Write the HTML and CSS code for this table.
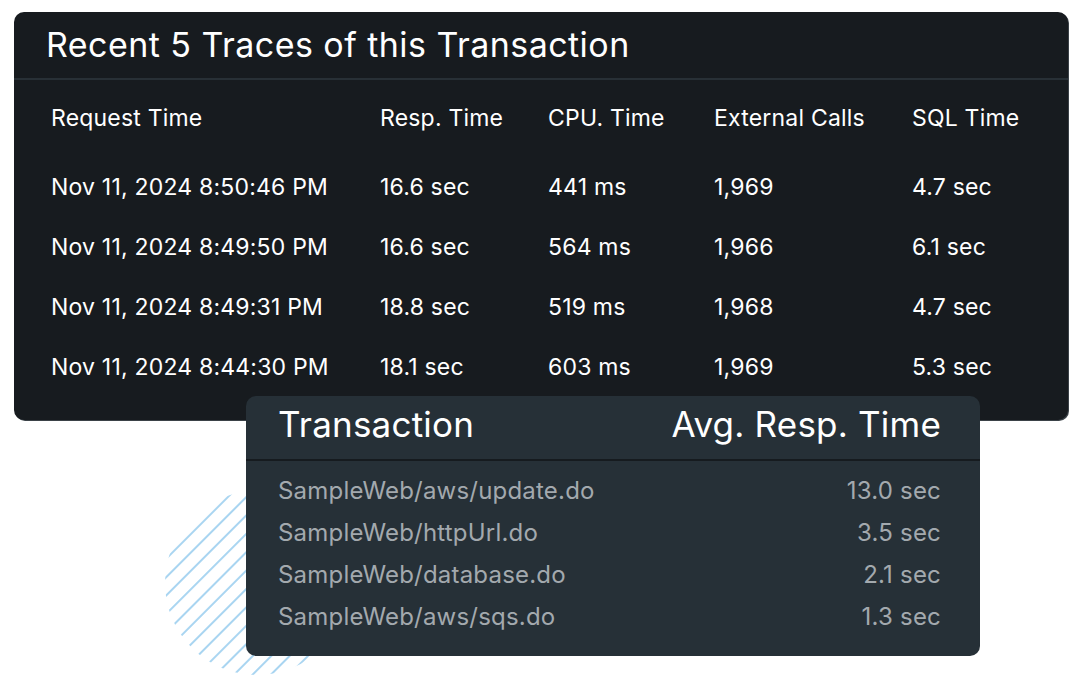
FILE: index.html
```html
<!DOCTYPE html>
<html lang="en">
<head>
    <meta charset="UTF-8">
    <meta name="viewport" content="width=device-width, initial-scale=1.0">
    <title>Recent Traces</title>
    <link rel="stylesheet" href="styles.css">
</head>
<body>
    <!-- hatched circle behind the summary card -->
    <svg class="hatch" width="190" height="190" viewBox="0 0 190 190">
        <defs>
            <pattern id="stripes" width="13" height="13" patternUnits="userSpaceOnUse" patternTransform="rotate(45)">
                <rect x="0" y="0" width="2" height="13" fill="#a9d5f1"></rect>
            </pattern>
            <clipPath id="disc">
                <circle cx="95" cy="95" r="92"></circle>
            </clipPath>
        </defs>
        <rect width="190" height="190" fill="url(#stripes)" clip-path="url(#disc)"></rect>
    </svg>

    <div class="traces-card">
        <h2 class="traces-title">Recent 5 Traces of this Transaction</h2>
        <div class="traces-table">
            <div class="traces-row traces-head">
                <span>Request Time</span>
                <span>Resp. Time</span>
                <span>CPU. Time</span>
                <span>External Calls</span>
                <span>SQL Time</span>
            </div>
            <div class="traces-row">
                <span>Nov 11, 2024 8:50:46 PM</span>
                <span>16.6 sec</span>
                <span>441 ms</span>
                <span>1,969</span>
                <span>4.7 sec</span>
            </div>
            <div class="traces-row">
                <span>Nov 11, 2024 8:49:50 PM</span>
                <span>16.6 sec</span>
                <span>564 ms</span>
                <span>1,966</span>
                <span>6.1 sec</span>
            </div>
            <div class="traces-row">
                <span>Nov 11, 2024 8:49:31 PM</span>
                <span>18.8 sec</span>
                <span>519 ms</span>
                <span>1,968</span>
                <span>4.7 sec</span>
            </div>
            <div class="traces-row">
                <span>Nov 11, 2024 8:44:30 PM</span>
                <span>18.1 sec</span>
                <span>603 ms</span>
                <span>1,969</span>
                <span>5.3 sec</span>
            </div>
        </div>
    </div>

    <div class="txn-card">
        <div class="txn-head">
            <span>Transaction</span>
            <span>Avg. Resp. Time</span>
        </div>
        <div class="txn-list">
            <div class="txn-row"><span>SampleWeb/aws/update.do</span><span>13.0 sec</span></div>
            <div class="txn-row"><span>SampleWeb/httpUrl.do</span><span>3.5 sec</span></div>
            <div class="txn-row"><span>SampleWeb/database.do</span><span>2.1 sec</span></div>
            <div class="txn-row"><span>SampleWeb/aws/sqs.do</span><span>1.3 sec</span></div>
        </div>
    </div>
</body>
</html>
```

FILE: styles.css
```css
body {
    margin: 0;
    background: #ffffff;
    font-family: Inter, "Noto Sans", sans-serif;
    position: relative;
    width: 1080px;
    height: 684px;
    overflow: hidden;
}

.hatch {
    position: absolute;
    left: 162px;
    top: 488px;
}

.traces-card {
    position: relative;
    margin: 12px 0 0 14px;
    width: 1054px;
    height: 408px;
    box-sizing: border-box;
    background: #171b1f;
    border-radius: 10px;
    box-shadow: 1px 1px 0 #3b4248;
    color: #ffffff;
}

.traces-title {
    margin: 0;
    height: 66px;
    line-height: 66px;
    padding-left: 32px;
    font-size: 34px;
    font-weight: 400;
    letter-spacing: 0.45px;
    border-bottom: 2px solid #283036;
}

.traces-table {
    padding: 8px 0 0 37px;
}

.traces-row {
    display: grid;
    grid-template-columns: 329px 168px 166px 198px 1fr;
    height: 60px;
    align-items: center;
    font-size: 23px;
    letter-spacing: 0.2px;
}

.traces-head {
    margin-bottom: 9px;
}

.txn-card {
    position: relative;
    margin: -24px 0 0 246px;
    width: 734px;
    height: 260px;
    box-sizing: border-box;
    background: #263037;
    border-radius: 10px;
    color: #a3a9ae;
}

.txn-head {
    display: flex;
    justify-content: space-between;
    align-items: center;
    height: 65px;
    padding: 0 39px 7px 32px;
    box-sizing: border-box;
    font-size: 35px;
    letter-spacing: 0.2px;
    color: #ffffff;
    border-bottom: 2px solid #161b1f;
}

.txn-list {
    padding: 8px 39px 0 32px;
}

.txn-row {
    display: flex;
    justify-content: space-between;
    align-items: center;
    height: 42px;
    font-size: 24px;
    letter-spacing: 0.2px;
}
```
